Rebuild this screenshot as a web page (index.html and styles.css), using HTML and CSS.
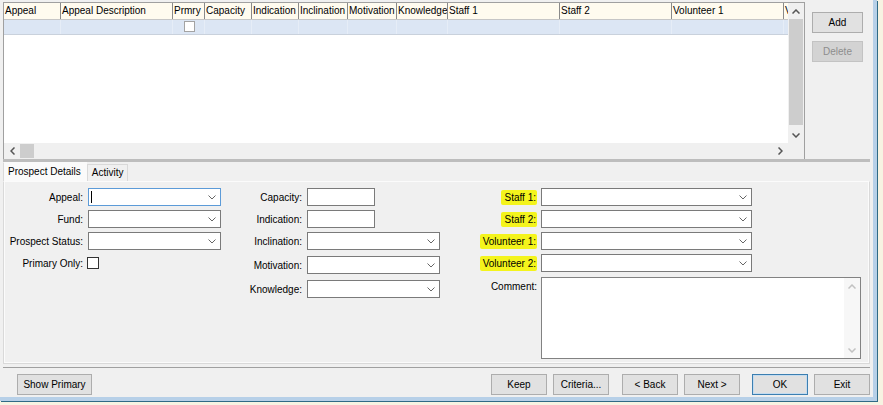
FILE: index.html
```html
<!DOCTYPE html>
<html lang="en">
<head>
    <meta charset="UTF-8">
    <meta name="viewport" content="width=device-width, initial-scale=1.0">
    <title>Prospect</title>
    <link rel="stylesheet" href="styles.css">
</head>
<body>
    <div class="frame">
        <div class="top">
            <div class="grid">
                <div class="grid-body">
                    <div class="cells">
                        <div class="row head">
                            <div class="cell">Appeal</div>
                            <div class="cell">Appeal Description</div>
                            <div class="cell">Prmry</div>
                            <div class="cell">Capacity</div>
                            <div class="cell">Indication</div>
                            <div class="cell">Inclination</div>
                            <div class="cell">Motivation</div>
                            <div class="cell">Knowledge</div>
                            <div class="cell">Staff 1</div>
                            <div class="cell">Staff 2</div>
                            <div class="cell">Volunteer 1</div>
                            <div class="cell">Volunteer 2</div>
                        </div>
                        <div class="row sel">
                            <div class="cell"></div>
                            <div class="cell"></div>
                            <div class="cell center"><span class="gcheck"></span></div>
                            <div class="cell"></div>
                            <div class="cell"></div>
                            <div class="cell"></div>
                            <div class="cell"></div>
                            <div class="cell"></div>
                            <div class="cell"></div>
                            <div class="cell"></div>
                            <div class="cell"></div>
                            <div class="cell"></div>
                        </div>
                    </div>
                    <div class="vscroll">
                        <div class="sarrow"><svg width="8" height="5" viewBox="0 0 8 5"><polyline points="0.5,4.5 4,1 7.5,4.5" fill="none" stroke="#555" stroke-width="1.5"/></svg></div>
                        <div class="vthumb"></div>
                        <div class="sarrow"><svg width="8" height="5" viewBox="0 0 8 5"><polyline points="0.5,0.5 4,4 7.5,0.5" fill="none" stroke="#555" stroke-width="1.5"/></svg></div>
                    </div>
                </div>
                <div class="hscroll">
                    <div class="sarrow"><svg width="5" height="8" viewBox="0 0 5 8"><polyline points="4.5,0.5 1,4 4.5,7.5" fill="none" stroke="#555" stroke-width="1.5"/></svg></div>
                    <div class="hthumb"></div>
                    <div class="htrack"></div>
                    <div class="sarrow"><svg width="5" height="8" viewBox="0 0 5 8"><polyline points="0.5,0.5 4,4 0.5,7.5" fill="none" stroke="#555" stroke-width="1.5"/></svg></div>
                    <div class="corner"></div>
                </div>
            </div>
            <div class="side">
                <button class="btn">Add</button>
                <button class="btn" disabled>Delete</button>
            </div>
        </div>
        <div class="splitter"></div>

        <div class="tabs">
            <div class="tab active">Prospect Details</div>
            <div class="tab">Activity</div>
        </div>
        <div class="panel">
            <div class="col col1">
                <div class="frow">
                    <label>Appeal:</label>
                    <div class="combo wide focus"><span class="caret"></span><svg class="chev" width="8" height="5" viewBox="0 0 8 5"><polyline points="0.5,0.5 4,4 7.5,0.5" fill="none" stroke="#666" stroke-width="1"/></svg></div>
                </div>
                <div class="frow">
                    <label>Fund:</label>
                    <div class="combo wide"><svg class="chev" width="8" height="5" viewBox="0 0 8 5"><polyline points="0.5,0.5 4,4 7.5,0.5" fill="none" stroke="#666" stroke-width="1"/></svg></div>
                </div>
                <div class="frow">
                    <label>Prospect Status:</label>
                    <div class="combo wide"><svg class="chev" width="8" height="5" viewBox="0 0 8 5"><polyline points="0.5,0.5 4,4 7.5,0.5" fill="none" stroke="#666" stroke-width="1"/></svg></div>
                </div>
                <div class="frow">
                    <label>Primary Only:</label>
                    <span class="check"></span>
                </div>
            </div>

            <div class="col col2">
                <div class="frow">
                    <label>Capacity:</label>
                    <div class="text"></div>
                </div>
                <div class="frow">
                    <label>Indication:</label>
                    <div class="text"></div>
                </div>
                <div class="frow">
                    <label>Inclination:</label>
                    <div class="combo wide"><svg class="chev" width="8" height="5" viewBox="0 0 8 5"><polyline points="0.5,0.5 4,4 7.5,0.5" fill="none" stroke="#666" stroke-width="1"/></svg></div>
                </div>
                <div class="frow spaced">
                    <label>Motivation:</label>
                    <div class="combo wide"><svg class="chev" width="8" height="5" viewBox="0 0 8 5"><polyline points="0.5,0.5 4,4 7.5,0.5" fill="none" stroke="#666" stroke-width="1"/></svg></div>
                </div>
                <div class="frow spaced">
                    <label>Knowledge:</label>
                    <div class="combo wide"><svg class="chev" width="8" height="5" viewBox="0 0 8 5"><polyline points="0.5,0.5 4,4 7.5,0.5" fill="none" stroke="#666" stroke-width="1"/></svg></div>
                </div>
            </div>

            <div class="col col3">
                <div class="frow">
                    <label><span class="hl">Staff 1:</span></label>
                    <div class="combo staff"><svg class="chev" width="8" height="5" viewBox="0 0 8 5"><polyline points="0.5,0.5 4,4 7.5,0.5" fill="none" stroke="#666" stroke-width="1"/></svg></div>
                </div>
                <div class="frow">
                    <label><span class="hl">Staff 2:</span></label>
                    <div class="combo staff"><svg class="chev" width="8" height="5" viewBox="0 0 8 5"><polyline points="0.5,0.5 4,4 7.5,0.5" fill="none" stroke="#666" stroke-width="1"/></svg></div>
                </div>
                <div class="frow">
                    <label><span class="hl">Volunteer 1:</span></label>
                    <div class="combo staff"><svg class="chev" width="8" height="5" viewBox="0 0 8 5"><polyline points="0.5,0.5 4,4 7.5,0.5" fill="none" stroke="#666" stroke-width="1"/></svg></div>
                </div>
                <div class="frow">
                    <label><span class="hl">Volunteer 2:</span></label>
                    <div class="combo staff"><svg class="chev" width="8" height="5" viewBox="0 0 8 5"><polyline points="0.5,0.5 4,4 7.5,0.5" fill="none" stroke="#666" stroke-width="1"/></svg></div>
                </div>
                <div class="frow memo-row">
                    <label>Comment:</label>
                    <div class="memo">
                        <div class="memo-scroll">
                            <svg width="8" height="5" viewBox="0 0 8 5"><polyline points="0.5,4.5 4,1 7.5,4.5" fill="none" stroke="#c2c2c2" stroke-width="1.5"/></svg>
                            <svg width="8" height="5" viewBox="0 0 8 5"><polyline points="0.5,0.5 4,4 7.5,0.5" fill="none" stroke="#c2c2c2" stroke-width="1.5"/></svg>
                        </div>
                    </div>
                </div>
            </div>
        </div>

        <div class="footer">
            <button class="btn show">Show Primary</button>
            <div class="actions">
                <button class="btn">Keep</button>
                <button class="btn">Criteria...</button>
                <button class="btn gap">&lt; Back</button>
                <button class="btn">Next &gt;</button>
                <button class="btn gap default">OK</button>
                <button class="btn">Exit</button>
            </div>
        </div>
    </div>
</body>
</html>
```

FILE: styles.css
```css
* {
    box-sizing: border-box;
}
html, body {
    margin: 0;
    height: 100%;
    overflow: hidden;
}
body {
    background: #f7f3e2;
    font-family: "Liberation Sans", Arial, sans-serif;
    font-size: 10px;
    color: #000;
}
.frame {
    width: 877px;
    height: 401px;
    background: #f0f0f0;
    border-right: 4px solid #b7d0e8;
    border-bottom: 4px solid #b7d0e8;
    box-shadow: 1px 1px 0 #2f6a86;
    padding: 2px 3px 0 3px;
    display: flex;
    flex-direction: column;
}

/* grid */
.top {
    display: flex;
    height: 157px;
}
.grid {
    width: 802px;
    border: 1px solid #a0a0a0;
    border-bottom: none;
    display: flex;
    flex-direction: column;
}
.grid-body {
    flex: 1;
    display: flex;
    min-height: 0;
}
.cells {
    flex: 1;
    background: #fff;
    overflow: hidden;
}
.row {
    display: grid;
    grid-template-columns: 57px 112px 32px 47px 47px 49px 49px 51px 112px 112px 112px 40px;
}
.row .cell {
    white-space: nowrap;
    overflow: hidden;
    padding-left: 1px;
}
.head {
    height: 17px;
    background: #fffbef;
    border-bottom: 1px solid #c6c6c6;
}
.head .cell {
    line-height: 16px;
    border-right: 1px solid #8a8a8a;
}
.sel {
    height: 15px;
    background: #dce6f4;
    border-bottom: 1px solid #c9d1dc;
}
.sel .cell {
    border-right: 1px solid #e6edf7;
}
.center {
    display: flex;
    justify-content: center;
}
.gcheck {
    width: 11px;
    height: 11px;
    margin-top: 1px;
    background: #fff;
    border: 1px solid #a3a3a3;
}

.sarrow {
    width: 16px;
    height: 16px;
    display: flex;
    align-items: center;
    justify-content: center;
    flex: none;
}
.vscroll {
    width: 16px;
    background: #f0f0f0;
    display: flex;
    flex-direction: column;
}
.vthumb {
    flex: 1;
    margin: 0 1px 2px 1px;
    background: #cdcdcd;
}
.hscroll {
    height: 16px;
    display: flex;
    background: #f0f0f0;
}
.hthumb {
    width: 14px;
    margin: 1px 0;
    background: #cdcdcd;
}
.htrack {
    flex: 1;
}
.corner {
    width: 16px;
}
.splitter {
    height: 3px;
    background: #bdbdbd;
}

.side {
    display: flex;
    flex-direction: column;
    gap: 8px;
    margin-left: 7px;
    padding-top: 10px;
}
.side .btn {
    width: 51px;
}

/* buttons */
.btn {
    height: 21px;
    background: #e1e1e1;
    border: 1px solid #adadad;
    font-family: inherit;
    font-size: 10px;
    color: #000;
    padding: 0;
}
.btn:disabled {
    background: #d3d3d3;
    border-color: #c3c3c3;
    color: #8d8d8d;
}
.btn.default {
    border-color: #3c7fb1;
    box-shadow: inset 0 0 0 1px #c4dcf0;
}

/* tabs */
.tabs {
    display: flex;
    align-items: flex-end;
    height: 19px;
}
.tab {
    height: 17px;
    line-height: 16px;
    padding: 0 4px;
    white-space: nowrap;
    border: 1px solid #d9d9d9;
    border-bottom: none;
    background: #f0f0f0;
}
.tab.active {
    height: 19px;
    line-height: 17px;
    padding: 0 5px 0 4px;
    background: #fafafa;
    border-color: #fafafa;
    border-left-color: #d9d9d9;
}
.panel {
    height: 183px;
    border: 1px solid #d9d9d9;
    border-top-color: #fbfbfb;
    box-shadow: inset 1px 0 0 #fbfbfb, inset -1px -1px 0 #fbfbfb;
    display: flex;
    align-items: flex-start;
    padding: 6px 0 0 4px;
}

/* form */
.col {
    display: flex;
    flex-direction: column;
    gap: 4px;
}
.frow {
    display: flex;
    align-items: center;
    gap: 5px;
    height: 18px;
}
.frow label {
    text-align: right;
    white-space: nowrap;
}
.col1 label {
    width: 75px;
}
.col2 {
    margin-left: 21px;
}
.col2 label {
    width: 60px;
}
.col3 {
    margin-left: 27px;
}
.col3 .frow {
    gap: 4px;
}
.col3 label {
    width: 70px;
}
.spaced {
    margin-top: 2px;
}
.hl {
    background: #f4f41c;
    padding: 2px 1px 2px 3px;
    border-radius: 2px;
}
.combo, .text {
    height: 18px;
    background: #fff;
    border: 1px solid #7a7a7a;
    position: relative;
}
.combo.wide {
    width: 133px;
}
.combo.staff {
    width: 211px;
}
.combo.focus {
    border-color: #5c9bd8;
}
.chev {
    position: absolute;
    right: 4px;
    top: 6px;
}
.caret {
    position: absolute;
    left: 2px;
    top: 2px;
    width: 1px;
    height: 12px;
    background: #000;
}
.text {
    width: 68px;
}
.check {
    width: 12px;
    height: 12px;
    margin-left: -1px;
    background: #fff;
    border: 1px solid #333;
}
.memo-row {
    height: 82px;
    align-items: flex-start;
    margin-top: 1px;
}
.memo-row label {
    padding-top: 4px;
}
.memo {
    width: 320px;
    height: 82px;
    background: #fff;
    border: 1px solid #828282;
    display: flex;
    justify-content: flex-end;
}
.memo-scroll {
    width: 16px;
    background: #f7f7f7;
    display: flex;
    flex-direction: column;
    justify-content: space-between;
    align-items: center;
    padding: 6px 0 5px;
}

/* footer */
.footer {
    margin-top: 3px;
    border-top: 1px solid #a0a0a0;
    padding: 6px 0 0 14px;
    display: flex;
}
.show {
    width: 75px;
}
.actions {
    margin-left: auto;
    display: flex;
    gap: 6px;
}
.actions .btn {
    width: 56px;
}
.actions .gap {
    margin-left: 7px;
}
.actions .default {
    margin-left: 6px;
}
```
